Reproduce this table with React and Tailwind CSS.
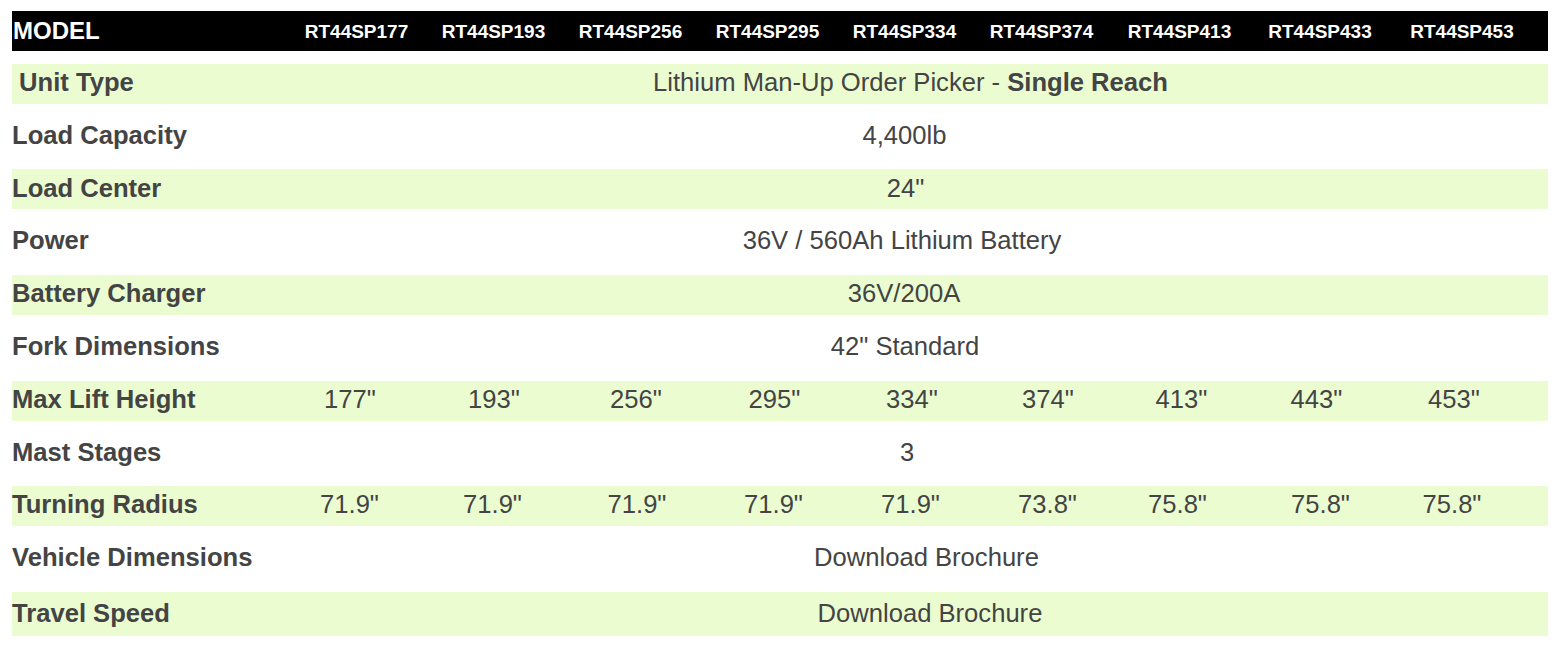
import React from 'react';

const models = [
  { name: 'RT44SP177', w: 'w-[137px]' },
  { name: 'RT44SP193', w: 'w-[137px]' },
  { name: 'RT44SP256', w: 'w-[137px]' },
  { name: 'RT44SP295', w: 'w-[137px]' },
  { name: 'RT44SP334', w: 'w-[137px]' },
  { name: 'RT44SP374', w: 'w-[137px]' },
  { name: 'RT44SP413', w: 'w-[139px]' },
  { name: 'RT44SP433', w: 'w-[142px]' },
  { name: 'RT44SP453', w: 'w-[142px]' },
];

// rows where one value spans every model column
const spanRows = {
  unit: 'w-[261px]',
  capacity: 'w-[249px]',
  center: 'w-[251px]',
  power: 'w-[244px]',
  charger: 'w-[248px]',
  fork: 'w-[250px]',
  mast: 'w-[254px]',
  vehicle: 'w-[293px]',
  travel: 'w-[300px]',
};

const liftCells = [
  { v: '177"', w: 'w-[144px]' },
  { v: '193"', w: 'w-[144px]' },
  { v: '256"', w: 'w-[140px]' },
  { v: '295"', w: 'w-[137px]' },
  { v: '334"', w: 'w-[138px]' },
  { v: '374"', w: 'w-[134px]' },
  { v: '413"', w: 'w-[133px]' },
  { v: '443"', w: 'w-[137px]' },
  { v: '453"', w: 'w-[138px]' },
];

const turnCells = [
  { v: '71.9"', w: 'w-[143px]' },
  { v: '71.9"', w: 'w-[143px]' },
  { v: '71.9"', w: 'w-[146px]' },
  { v: '71.9"', w: 'w-[127px]' },
  { v: '71.9"', w: 'w-[147px]' },
  { v: '73.8"', w: 'w-[127px]' },
  { v: '75.8"', w: 'w-[133px]' },
  { v: '75.8"', w: 'w-[153px]' },
  { v: '75.8"', w: 'w-[110px]' },
];

const Label = ({ children, w }) => (
  <div className={`${w} shrink-0 font-bold whitespace-nowrap`}>{children}</div>
);

const SpanRow = ({ label, w, green, tall, children }) => (
  <div className={`flex items-center ${tall ? 'h-[44px]' : 'h-[40px] pb-[2px]'} ${green ? 'bg-[#ebfcd1]' : ''}`}>
    <Label w={w}>{label}</Label>
    <div className="flex-1 text-center whitespace-nowrap">{children}</div>
  </div>
);

const SplitRow = ({ label, cells, green }) => (
  <div className={`flex items-center pb-[2px] h-[40px] ${green ? 'bg-[#ebfcd1]' : ''}`}>
    <Label w="w-[266px]">{label}</Label>
    {cells.map((c, i) => (
      <div key={i} className={`${c.w} shrink-0 text-center`}>{c.v}</div>
    ))}
  </div>
);

export default function App() {
  return (
    <div
      className="bg-white w-[1562px] h-[649px] pt-[11px] pl-[12px] text-[#444] text-[25.6px] leading-none"
      style={{ fontFamily: '"Liberation Sans", Arial, sans-serif' }}
    >
      <div className="w-[1536px] flex flex-col gap-[12.8px]">
        {/* Header */}
        <div className="flex items-center h-[40px] bg-black text-white font-bold">
          <div className="w-[276px] shrink-0 pl-[1px] text-[24px]">MODEL</div>
          {models.map((m) => (
            <div key={m.name} className={`${m.w} shrink-0 text-center text-[19px]`}>
              {m.name}
            </div>
          ))}
        </div>

        <SpanRow label={'\u00a0Unit Type'} w={spanRows.unit} green>
          Lithium Man-Up Order Picker - <span className="font-bold">Single Reach</span>
        </SpanRow>
        <SpanRow label="Load Capacity" w={spanRows.capacity}>4,400lb</SpanRow>
        <SpanRow label="Load Center" w={spanRows.center} green>24"</SpanRow>
        <SpanRow label="Power" w={spanRows.power}>36V / 560Ah Lithium Battery</SpanRow>
        <SpanRow label="Battery Charger" w={spanRows.charger} green>36V/200A</SpanRow>
        <SpanRow label="Fork Dimensions" w={spanRows.fork}>42" Standard</SpanRow>
        <SplitRow label="Max Lift Height" cells={liftCells} green />
        <SpanRow label="Mast Stages" w={spanRows.mast}>3</SpanRow>
        <SplitRow label="Turning Radius" cells={turnCells} green />
        <SpanRow label="Vehicle Dimensions" w={spanRows.vehicle}>Download Brochure</SpanRow>
        <SpanRow label="Travel Speed" w={spanRows.travel} green tall>Download Brochure</SpanRow>
      </div>
    </div>
  );
}
